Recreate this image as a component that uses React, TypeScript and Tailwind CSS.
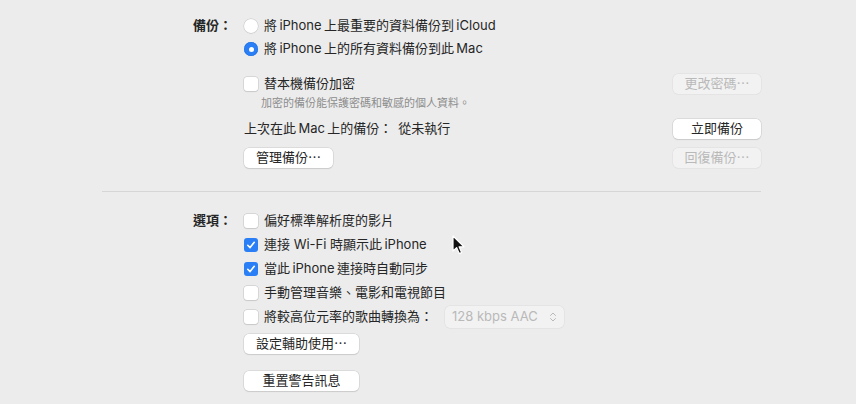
import { ChevronsUpDown } from "lucide-react"

const font = { fontFamily: '"Inter", "Noto Sans CJK TC", sans-serif' }

function Radio({ checked }: { checked?: boolean }) {
  return checked ? (
    <span className="flex items-center justify-center size-[14px] rounded-full bg-[#2a7ff6] shadow-[inset_0_0_0_0.5px_#1f6fe0]">
      <span className="size-[5px] rounded-full bg-white" />
    </span>
  ) : (
    <span className="size-[14px] rounded-full bg-white shadow-[0_0_0_0.5px_#c4c4c4,0_0.5px_1px_#d0d0d0]" />
  )
}

function Check({ checked }: { checked?: boolean }) {
  return checked ? (
    <span className="flex items-center justify-center size-[14px] rounded-[3px] bg-[#2a7ff6]">
      <svg viewBox="0 0 14 14" className="size-[12px]">
        <path
          d="M3.2 7.3 L5.9 10 L10.8 3.9"
          fill="none"
          stroke="white"
          strokeWidth="1.9"
          strokeLinecap="round"
          strokeLinejoin="round"
        />
      </svg>
    </span>
  ) : (
    <span className="size-[14px] rounded-[3px] bg-white shadow-[0_0_0_0.5px_#c4c4c4,0_0.5px_1px_#d0d0d0]" />
  )
}

function Btn({
  children,
  w,
  disabled,
}: {
  children: React.ReactNode
  w: string
  disabled?: boolean
}) {
  return (
    <div
      className={`${w} h-[20px] flex items-center justify-center rounded-[5px] text-[13px] ${
        disabled
          ? "bg-[#f2f2f2] text-[#b9b9b9] shadow-[0_0_0_0.5px_#dcdcdc]"
          : "bg-white text-[#262626] shadow-[0_0_0_0.5px_#c9c9c9,0_1px_1px_#cfcfcf]"
      }`}
    >
      {children}
    </div>
  )
}

function Option({ checked, children }: { checked?: boolean; children: React.ReactNode }) {
  return (
    <div className="h-[24px] flex items-center gap-[6px]">
      <Check checked={checked} />
      <span>{children}</span>
    </div>
  )
}

export default function App() {
  return (
    <div
      style={font}
      className="relative w-[856px] h-[404px] bg-[#ececec] text-[13px] text-[#262626] overflow-hidden"
    >
      <div className="ml-[102px] w-[659px] pt-[14px]">
        {/* backup */}
        <div className="flex">
          <div className="w-[130px] h-[23px] flex items-center justify-end font-semibold">
            備份：
          </div>
          <div className="ml-[12px] flex-1">
            <div className="h-[23px] flex items-center gap-[6px]">
              <Radio />
              <span>將{"\u2009"}iPhone{"\u2009"}上最重要的資料備份到{"\u2009"}iCloud</span>
            </div>
            <div className="h-[24px] flex items-center gap-[6px]">
              <Radio checked />
              <span>將{"\u2009"}iPhone{"\u2009"}上的所有資料備份到此{"\u2009"}Mac</span>
            </div>

            <div className="mt-[12px] h-[22px] flex items-center justify-between">
              <div className="flex items-center gap-[6px]">
                <Check />
                <span>替本機備份加密</span>
              </div>
              <Btn w="w-[88px]" disabled>
                更改密碼⋯
              </Btn>
            </div>
            <div className="h-[17px] flex items-center pl-[17px] text-[11px] text-[#8c8c8c]">
              加密的備份能保護密碼和敏感的個人資料。
            </div>

            <div className="mt-[7px] h-[20px] flex items-center justify-between">
              <div className="flex items-center">
                <span>上次在此{"\u2009"}Mac{"\u2009"}上的備份：</span>
                <span className="ml-[6px]">從未執行</span>
              </div>
              <Btn w="w-[88px]">立即備份</Btn>
            </div>
            <div className="mt-[9px] h-[20px] flex items-center justify-between">
              <Btn w="w-[89px]">管理備份⋯</Btn>
              <Btn w="w-[88px]" disabled>
                回復備份⋯
              </Btn>
            </div>
          </div>
        </div>

        <div className="mt-[23px] h-px bg-[#d6d6d6]" />

        {/* options */}
        <div className="mt-[17px] flex">
          <div className="w-[130px] h-[24px] flex items-center justify-end font-semibold">
            選項：
          </div>
          <div className="ml-[12px] flex-1">
            <Option>偏好標準解析度的影片</Option>
            <Option checked>連接 Wi-Fi 時顯示此{"\u2009"}iPhone</Option>
            <Option checked>當此{"\u2009"}iPhone{"\u2009"}連接時自動同步</Option>
            <Option>手動管理音樂、電影和電視節目</Option>
            <div className="h-[24px] flex items-center">
              <div className="flex items-center gap-[6px]">
                <Check />
                <span>將較高位元率的歌曲轉換為：</span>
              </div>
              <div className="ml-[12px] w-[119px] h-[22px] flex items-center justify-between pl-[7px] pr-[5px] rounded-[5px] bg-[#f2f2f2] text-[#b9b9b9] shadow-[0_0_0_0.5px_#dcdcdc]">
                <span>128 kbps AAC</span>
                <ChevronsUpDown size={12} strokeWidth={2} />
              </div>
            </div>
            <div className="mt-[5px]">
              <Btn w="w-[115px]">設定輔助使用⋯</Btn>
            </div>
            <div className="mt-[17px]">
              <Btn w="w-[115px]">重置警告訊息</Btn>
            </div>
          </div>
        </div>
      </div>

      {/* mouse cursor */}
      <svg
        viewBox="0 0 14 22"
        className="absolute left-[452px] top-[235px] w-[14px] h-[22px]"
      >
        <path
          d="M1 1 L1 16 L4.6 12.6 L7.2 18.6 L9.6 17.6 L7.1 11.8 L12 11.8 Z"
          fill="#111"
          stroke="white"
          strokeWidth="1.2"
          strokeLinejoin="round"
        />
      </svg>
    </div>
  )
}
